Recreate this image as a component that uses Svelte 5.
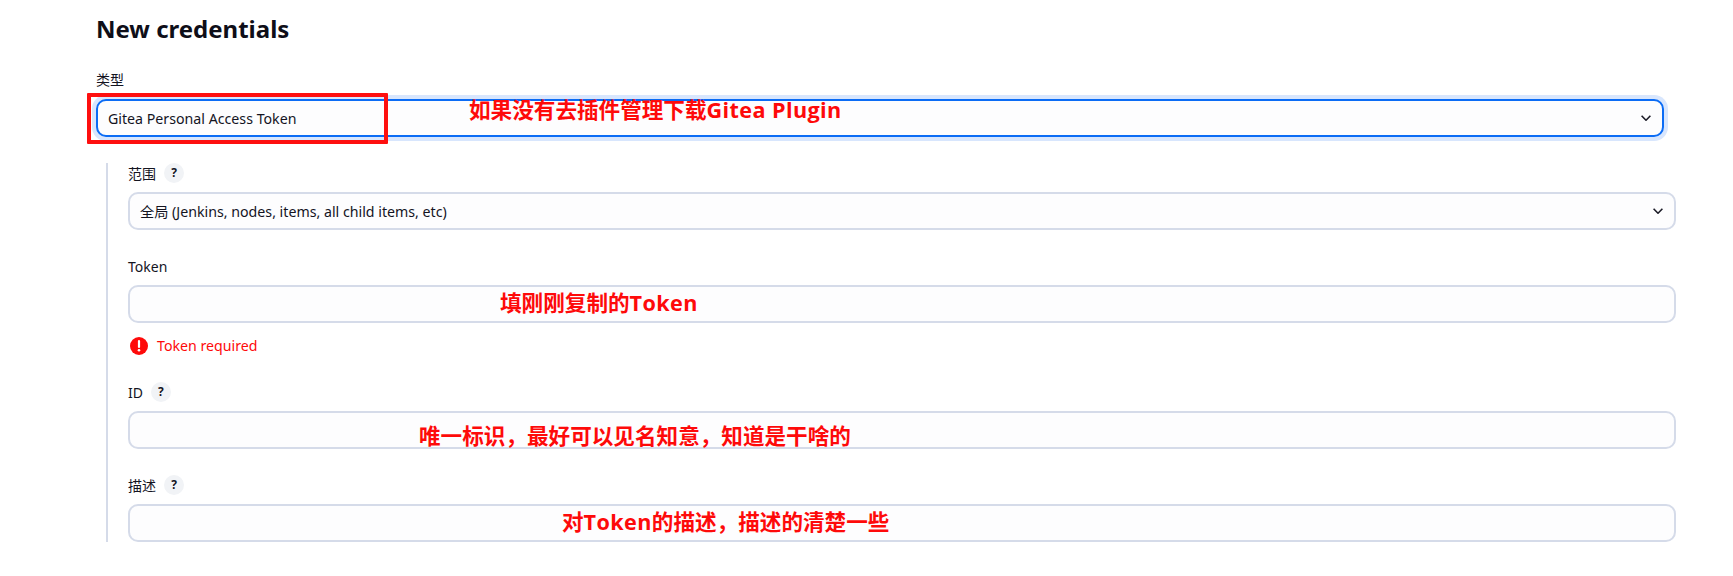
<script>
	const fields = [
		{ label: '范围', help: true, kind: 'select', value: '全局 (Jenkins, nodes, items, all child items, etc)' },
		{ label: 'Token', kind: 'input', error: 'Token required' },
		{ label: 'ID', help: true, kind: 'input' },
		{ label: '描述', help: true, kind: 'input' }
	]
	const notes = [
		{ text: '如果没有去插件管理下载Gitea Plugin', x: 469, y: 95 },
		{ text: '填刚刚复制的Token', x: 500, y: 288 },
		{ text: '唯一标识，最好可以见名知意，知道是干啥的', x: 419, y: 421 },
		{ text: '对Token的描述，描述的清楚一些', x: 562, y: 507 }
	]
	// latin runs of the annotations are a bit wider than the font gives
	const parts = (s) => s.split(/([A-Za-z ]+)/).filter(Boolean)
</script>

<main>
	<h1>New credentials</h1>
	<label class="top-label">类型</label>
	<div class="control select focus">
		<span>Gitea Personal Access Token</span>
		<svg viewBox="0 0 10 6" width="10" height="6"><path d="M.6.8 5 5.2 9.4.8" /></svg>
	</div>

	<section>
		{#each fields as f}
			<div class="field">
				<div class="label">
					<span>{f.label}</span>
					{#if f.help}<span class="help">?</span>{/if}
				</div>
				<div class="control" class:select={f.kind === 'select'}>
					{#if f.value}<span>{f.value}</span>{/if}
					{#if f.kind === 'select'}
						<svg viewBox="0 0 10 6" width="10" height="6"><path d="M.6.8 5 5.2 9.4.8" /></svg>
					{/if}
				</div>
				{#if f.error}
					<div class="error">
						<svg viewBox="0 0 18 18" width="18" height="18">
							<circle cx="9" cy="9" r="9" fill="#fe0a0a" />
							<path d="M9 4v6" stroke="#fff" stroke-width="2.2" stroke-linecap="round" />
							<circle cx="9" cy="13.2" r="1.3" fill="#fff" />
						</svg>
						<span>{f.error}</span>
					</div>
				{/if}
			</div>
		{/each}
	</section>

	<div class="mark"></div>
	{#each notes as n}
		<div class="note" style="left:{n.x}px;top:{n.y}px">
			{#each parts(n.text) as p}
				<span class:latin={/[A-Za-z]/.test(p)}>{p}</span>
			{/each}
		</div>
	{/each}
</main>

<style>
	:global(body) {
		margin: 0;
		background: #fff;
		overflow: hidden;
	}
	main {
		position: relative;
		height: 576px;
		box-sizing: border-box;
		padding: 13px 57px 0 96px;
		font-family: 'Noto Sans', 'Noto Sans CJK SC', sans-serif;
		font-size: 14.2px;
		color: #14141f;
	}
	h1 {
		margin: 0;
		font-size: 24px;
		line-height: 32px;
		font-weight: 700;
		color: #0e0e18;
	}
	.top-label {
		display: block;
		margin-top: 25px;
		height: 20px;
		line-height: 20px;
		font-size: 14px;
	}
	.control {
		box-sizing: border-box;
		height: 38px;
		border: 2px solid #d5dbe9;
		border-radius: 10px;
		background: #fdfdfe;
		display: flex;
		align-items: center;
		justify-content: space-between;
		padding: 0 11px 0 10px;
	}
	.focus {
		margin-top: 9px;
		width: 1568px;
		border-color: #0b6cf5;
		box-shadow: 0 0 0 4px #d8e6fd;
	}
	svg path {
		fill: none;
	}
	.select svg path {
		stroke: #1c1c28;
		stroke-width: 1.6;
	}
	section {
		margin: 26px 0 0 10px;
		border-left: 2px solid #d5dbe9;
		padding-left: 20px;
		display: flex;
		flex-direction: column;
		gap: 26px;
	}
	.label {
		display: flex;
		align-items: center;
		gap: 8px;
		height: 20px;
		margin-bottom: 9px;
		font-size: 14px;
	}
	.help {
		width: 20px;
		height: 20px;
		border-radius: 50%;
		background: #f1f3f6;
		font-size: 12px;
		font-weight: 700;
		text-align: center;
		line-height: 20px;
	}
	.error {
		display: flex;
		align-items: center;
		gap: 9px;
		margin-top: 13px;
		padding-left: 2px;
		height: 20px;
		color: #fe0a0a;
	}
	.error span {
		margin-bottom: 2px;
	}
	.mark {
		position: absolute;
		left: 87px;
		top: 93px;
		width: 301px;
		height: 51px;
		box-sizing: border-box;
		border: 4px solid #fe0f0f;
		border-radius: 1px;
	}
	.note {
		position: absolute;
		display: flex;
		color: #fe0a0a;
		font-family: 'Open Sans', 'Noto Sans CJK SC', sans-serif;
		font-size: 21.6px;
		font-weight: 700;
		line-height: 30px;
		white-space: pre;
	}
	.latin {
		letter-spacing: 0.4px;
	}
</style>
